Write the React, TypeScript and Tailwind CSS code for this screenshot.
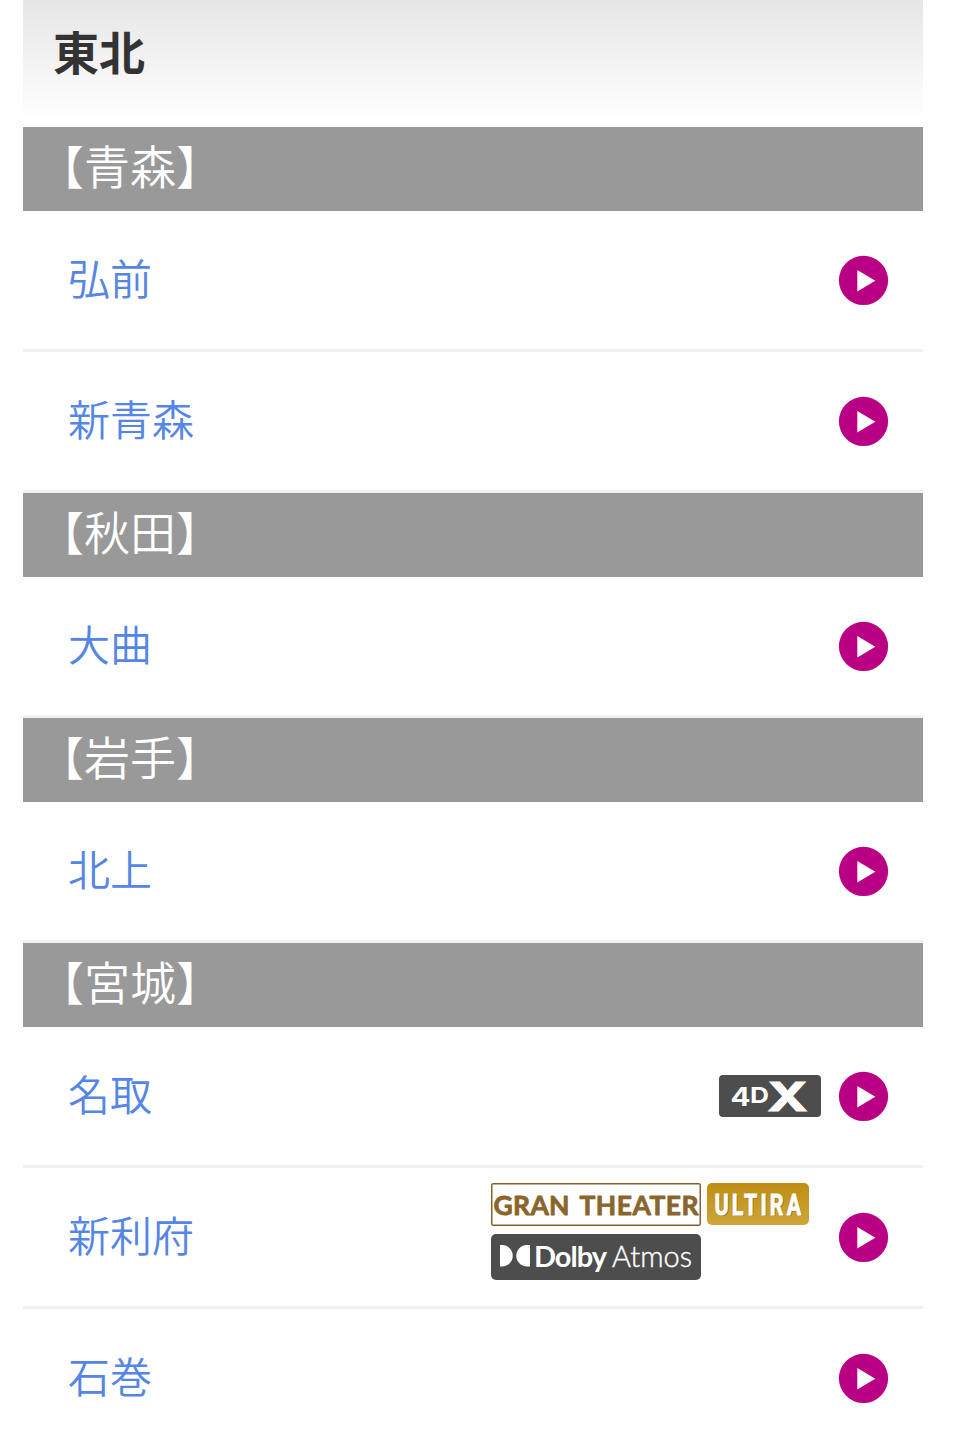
type Format = "4dx" | "gran-theater" | "ultira" | "dolby-atmos";

interface Theater {
  name: string;
  formats?: Format[];
}

interface Prefecture {
  name: string;
  theaters: Theater[];
}

const prefectures: Prefecture[] = [
  { name: "青森", theaters: [{ name: "弘前" }, { name: "新青森" }] },
  { name: "秋田", theaters: [{ name: "大曲" }] },
  { name: "岩手", theaters: [{ name: "北上" }] },
  {
    name: "宮城",
    theaters: [
      { name: "名取", formats: ["4dx"] },
      { name: "新利府", formats: ["gran-theater", "ultira", "dolby-atmos"] },
      { name: "石巻" },
    ],
  },
];

function FourDxBadge() {
  return (
    <svg width="102" height="42" viewBox="0 0 102 42" className="block overflow-visible">
      <rect width="102" height="42" rx="4" fill="#4d4d4d" />
      <g fill="#fff" className="font-['Inter'] font-bold">
        <text x="11.5" y="30.5" fontSize="25" textLength="20" lengthAdjust="spacingAndGlyphs">
          4
        </text>
        <text x="31" y="28" fontSize="21" textLength="19" lengthAdjust="spacingAndGlyphs">
          D
        </text>
        <text
          x="48.5"
          y="35.5"
          fontSize="40"
          stroke="#fff"
          strokeWidth="1"
          textLength="40"
          lengthAdjust="spacingAndGlyphs"
        >
          X
        </text>
      </g>
    </svg>
  );
}

function GranTheaterBadge() {
  return (
    <svg width="210" height="43" viewBox="0 0 210 43" className="block overflow-visible">
      <rect x="0.75" y="0.75" width="208.5" height="41.5" rx="1.5" fill="#fff" stroke="#83602f" strokeWidth="1.5" />
      <g
        fontSize="26.5"
        fill="#8a652c"
        stroke="#8a652c"
        strokeWidth="0.8"
        strokeLinejoin="round"
        className="font-['Lato'] font-bold"
      >
        <text x="2.5" y="31.5" textLength="76">
          GRAN
        </text>
        <text x="88.5" y="31.5" textLength="119">
          THEATER
        </text>
      </g>
    </svg>
  );
}

function UltiraBadge() {
  return (
    <svg width="102" height="42" viewBox="0 0 102 42" className="block">
      <defs>
        <linearGradient id="ultira" x1="0" y1="0" x2="0" y2="1">
          <stop offset="0" stopColor="#bf8e12" />
          <stop offset="1" stopColor="#cfa53b" />
        </linearGradient>
      </defs>
      <rect width="102" height="42" rx="5" fill="url(#ultira)" />
      <g fontSize="29" className="font-['Roboto'] font-bold">
        <text transform="translate(8.5 32.5) scale(0.74 1)" fill="#92701f" textLength="117">
          ULTIRA
        </text>
        <text
          transform="translate(7.5 31.5) scale(0.74 1)"
          fill="#fff"
          stroke="#fff"
          strokeWidth="0.8"
          textLength="117"
        >
          ULTIRA
        </text>
      </g>
    </svg>
  );
}

function DolbyAtmosBadge() {
  return (
    <svg width="210" height="46" viewBox="0 0 210 46" className="block">
      <rect width="210" height="46" rx="5" fill="#4d4d4d" />
      <g fill="#fff">
        <path d="M9 11h2a10.7 10.7 0 0 1 0 21.5H9z" />
        <path d="M39 11h-3a10.7 10.7 0 0 0 0 21.5h3z" />
        <text x="43" y="32.5" fontSize="29" textLength="73" className="font-['Lato'] font-bold">
          Dolby
        </text>
        <text
          x="121"
          y="32.5"
          fontSize="29"
          textLength="80"
          stroke="#fff"
          strokeWidth="0.4"
          className="font-['Lato'] font-light"
        >
          Atmos
        </text>
      </g>
    </svg>
  );
}

const badges = {
  "4dx": FourDxBadge,
  "gran-theater": GranTheaterBadge,
  ultira: UltiraBadge,
  "dolby-atmos": DolbyAtmosBadge,
};

function PlayIcon() {
  return (
    <svg width="50" height="50" viewBox="0 0 50 50" className="block shrink-0 overflow-visible">
      <circle cx="25.5" cy="25.4" r="24.6" fill="#b90085" />
      <path d="M19.3 15v21.5L37.3 25.7z" fill="#fff" />
    </svg>
  );
}

function TheaterRow({ name, formats = [] }: Theater) {
  const wrapped = formats.length > 1;

  return (
    <li className="border-b-[3px] border-[#f1f1f1]">
      <a href="#" className="flex h-[138px] items-center pr-[35px] pl-[45px]">
        <span className="grow pb-1.5 text-[42px] leading-none text-[#5586e6]">{name}</span>
        <span
          className={
            wrapped
              ? "mr-[19px] mb-[11px] flex w-[328px] flex-wrap content-start gap-x-1.5 gap-y-2"
              : "mr-[17px] flex"
          }
        >
          {formats.map((format) => {
            const Badge = badges[format];
            return <Badge key={format} />;
          })}
        </span>
        <PlayIcon />
      </a>
    </li>
  );
}

export default function App() {
  return (
    <main
      lang="ja"
      className="h-[1442px] overflow-hidden bg-white pr-[33px] pl-[23px] font-['Noto_Sans_CJK_JP',sans-serif] font-[350]"
    >
      <h1 className="h-[127px] bg-linear-to-b from-[#e6e6e6] to-white to-95% pt-[27px] pl-[30px] text-[46px] leading-none font-bold text-[#333]">
        東北
      </h1>
      {prefectures.map((prefecture) => (
        <section key={prefecture.name}>
          <h2 className="h-[84px] bg-[#999] pt-3.5 pl-[15px] text-[46px] leading-none text-white">
            【{prefecture.name}】
          </h2>
          <ul>
            {prefecture.theaters.map((theater) => (
              <TheaterRow key={theater.name} {...theater} />
            ))}
          </ul>
        </section>
      ))}
    </main>
  );
}
